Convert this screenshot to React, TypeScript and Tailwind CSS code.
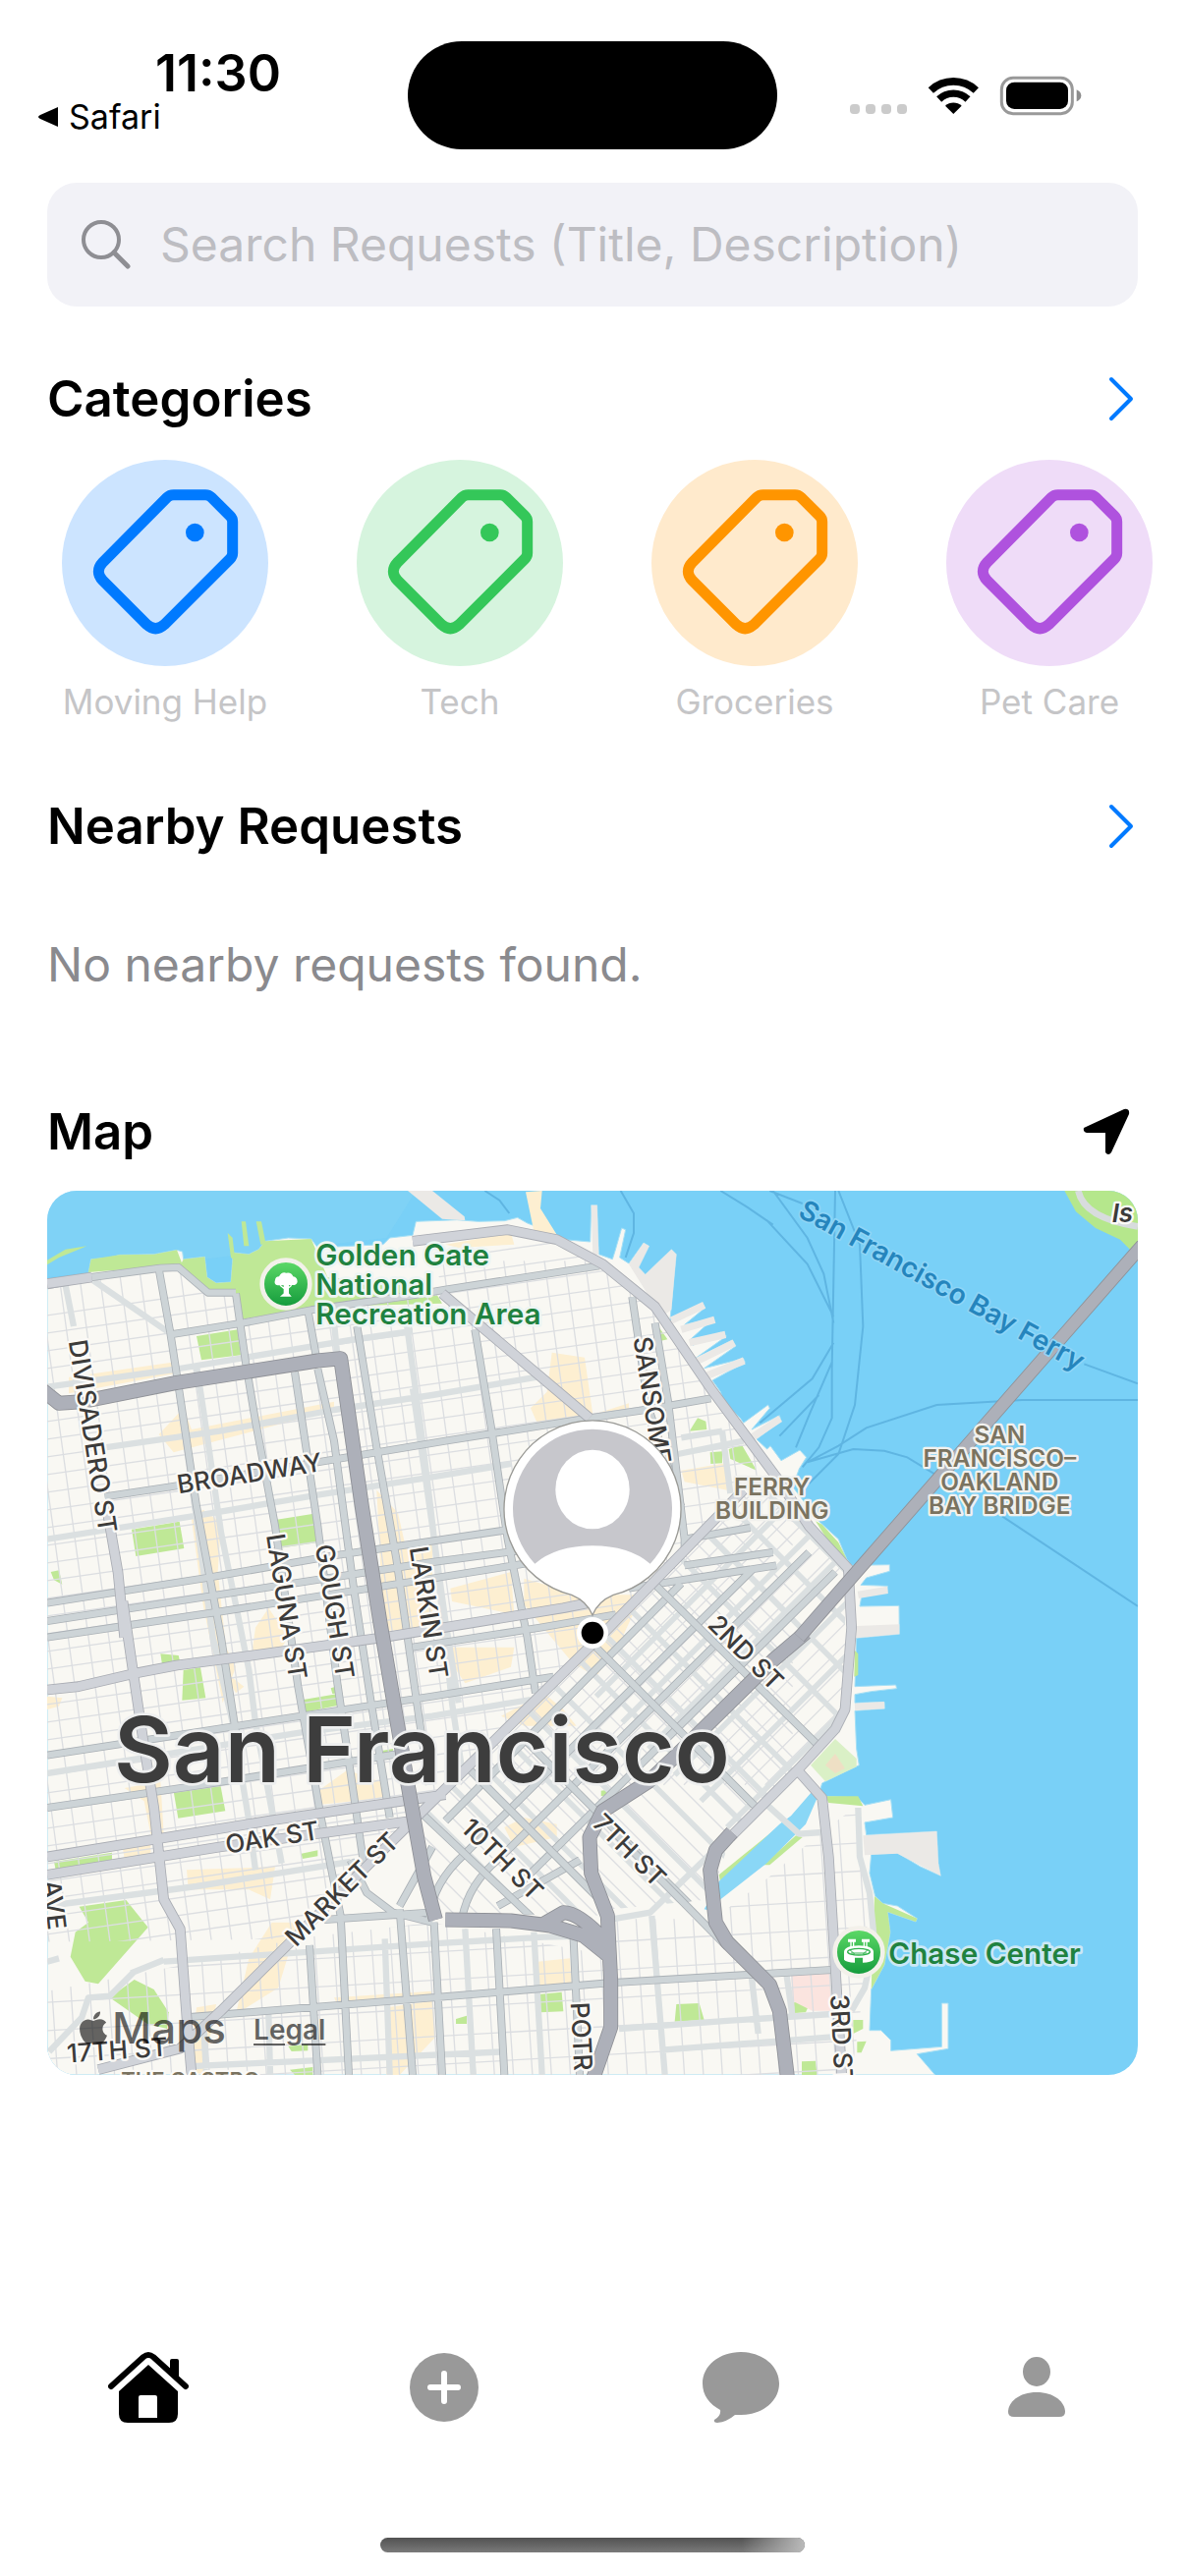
import React from "react";
import { FaApple } from "react-icons/fa";

const categories = [
  { name: "Moving Help", disc: "bg-[#cce4ff]", ink: "text-[#007aff]" },
  { name: "Tech", disc: "bg-[#d6f4de]", ink: "text-[#34c759]" },
  { name: "Groceries", disc: "bg-[#ffeacc]", ink: "text-[#ff9500]" },
  { name: "Pet Care", disc: "bg-[#efdcf8]", ink: "text-[#af52de]" },
];

function StatusBar() {
  return (
    <header className="grid grid-cols-[1fr_376px_1fr] pt-[42px]">
      <div className="flex flex-col items-start pt-1">
        <time className="pl-[158px] text-[52px] leading-[58px] font-semibold">11:30</time>
        <a href="#safari" className="-mt-1 flex items-center gap-[10px] pl-[38px] text-[34px] leading-[38px]">
          <svg viewBox="0 0 22 22" className="size-[22px]" aria-hidden="true">
            <path d="M21 1v20L3 13q-4-2 0-4z" />
          </svg>
          Safari
        </a>
      </div>
      <div className="h-[110px] rounded-[55px] bg-black" />
      <div className="flex items-start pt-2 pl-[74px]">
        <svg viewBox="0 0 240 90" className="h-[90px] w-60" aria-label="Wi-Fi on, battery full">
          <g transform="scale(.33333)">
            {[0, 48, 96, 144].map((x) => (
              <rect key={x} x={x} y="168" width="30" height="30" rx="11" fill="#cbcbcb" />
            ))}
            <g fill="none" stroke="#000">
              <path d="M247 126A101 101 0 0 1 385 126" strokeWidth="23" />
              <path d="M272 153A64 64 0 0 1 360 153" strokeWidth="22" />
            </g>
            <path d="M316 198L291 173A37 37 0 0 1 341 173Z" />
            <rect x="463" y="88" width="216" height="109" rx="35" fill="none" stroke="#999" strokeWidth="9" />
            <rect x="477" y="101" width="189" height="82" rx="25" />
            <path d="M692 124Q706 130 706 142Q706 154 692 160Z" fill="#8c8c8c" />
          </g>
        </svg>
      </div>
    </header>
  );
}

function Chevron() {
  return (
    <svg viewBox="0 0 28 46" className="mr-[2px] h-[46px] w-7 text-[#007aff]" fill="none" stroke="currentColor" strokeWidth="4" strokeLinecap="round" strokeLinejoin="round" aria-hidden="true">
      <path d="M3 3L23 23L3 43" />
    </svg>
  );
}

function SectionHeader({ title, label, children }: { title: string; label: string; children: React.ReactNode }) {
  return (
    <div className="flex items-center justify-between px-12">
      <h2 className="text-[51px] leading-[60px] font-semibold">{title}</h2>
      <button type="button" aria-label={label}>
        {children}
      </button>
    </div>
  );
}

function TagIcon() {
  return (
    <svg viewBox="9 24 630 630" className="size-full" fill="none" aria-hidden="true">
      <path
        d="M350 131H447Q458 131 466 139L522 195Q530 203 530 213V309Q530 319 522 327L322 527Q295 551 268 527L134 393Q108 365 134 337L330 139Q338 131 350 131Z"
        stroke="currentColor"
        strokeWidth="33"
      />
      <circle cx="415" cy="246" r="28" fill="currentColor" />
    </svg>
  );
}

type Line = string;

/* Parallel block streets: `n` lines from (x,y), each one step further on, running along (dx,dy). */
function streets(x: number, y: number, stepX: number, stepY: number, n: number, dx: number, dy: number): Line {
  let d = "";
  for (let i = 0; i < n; i++) d += `M${x + i * stepX} ${y + i * stepY}l${dx} ${dy}`;
  return d;
}

const LAND =
  "24,312 90,300 150,288 158,245 215,240 245,232 350,230 420,217 437,222 440,245 505,238 512,300 540,318 585,315 592,225 640,230 670,215 690,190 760,180 830,183 850,210 1050,200 1070,180 1140,172 1150,130 1275,125 1340,130 1420,128 1460,118 1490,135 1580,170 1600,185 1682,192 1685,80 1703,80 1708,230 1750,245 1758,220 1778,150 1790,155 1772,240 1800,258 1845,195 1862,205 1830,270 1850,292 1930,215 1945,230 1938,300 1926,430 1955,430 2025,380 2033,393 1970,445 2060,425 1988,490 1995,508 2080,468 2098,480 2000,550 2115,492 2127,510 2030,578 2150,548 2155,560 2055,615 2080,650 2090,680 2140,730 2150,745 2225,690 2230,700 2175,765 2260,722 2265,738 2190,795 2222,825 2232,815 2265,860 2322,828 2342,850 2320,885 2300,940 2380,1045 2440,1100 2465,1160 2480,1180 2596,1178 2596,1198 2525,1218 2508,1240 2590,1243 2590,1260 2510,1277 2505,1305 2625,1303 2626,1390 2495,1402 2490,1550 2540,1548 2615,1545 2618,1556 2540,1565 2490,1574 2490,1600 2580,1597 2582,1617 2490,1624 2495,1740 2503,1790 2450,1815 2390,1845 2380,1880 2400,1885 2500,1890 2520,1912 2600,1895 2606,1950 2520,1965 2525,2003 2740,1992 2745,2090 2752,2128 2690,2100 2620,2058 2540,2062 2535,2120 2552,2190 2575,2212 2620,2220 2680,2258 2676,2268 2590,2238 2598,2300 2580,2400 2540,2475 2535,2600 2570,2600 2600,2630 2600,2662 2755,2650 2755,2517 2775,2517 2775,2656 2680,2672 2735,2736 24,2736";

const GREEN = [
  "24,248 80,215 145,205 60,240 24,262",
  "150,285 158,245 245,232 350,230 420,217 437,262 370,268",
  "430,265 440,245 505,238 512,300 540,318 585,315 592,225 640,230 670,215 690,190 830,183 880,300 1200,330 1230,380 850,390 620,428 600,347 515,347",
  "575,165 590,180 598,250 585,240", "617,130 630,130 640,205 625,205", "662,130 678,130 692,200 676,200",
  "480,480 605,460 615,538 495,553", "282,1070 428,1046 442,1128 295,1152", "716,1042 838,1022 850,1110 730,1128",
  "35,1200 60,1195 70,1238 45,1225", "370,1450 425,1455 430,1475 375,1482", "440,1500 492,1492 508,1585 436,1592",
  "806,1590 925,1570 925,1605 810,1628", "890,1555 922,1545 922,1570 895,1572", "410,1870 552,1846 568,1930 424,1952",
  "45,2085 222,2057 222,2080 50,2110", "800,2060 850,2050 850,2068 803,2076", "1050,1745 1080,1740 1080,1758 1050,1760",
  "122,2222 265,2202 332,2285 180,2458 140,2450 95,2375 110,2300 150,2270", "215,2500 290,2445 350,2475 395,2545 390,2595 330,2580",
  "1890,450 1918,490 1895,495", "1985,770 2010,730 2035,740 2038,765", "2048,835 2085,832 2085,868 2050,870", "2105,825 2145,812 2190,890 2110,855",
  "2370,1045 2390,1055 2440,1110 2465,1160 2430,1140", "2490,1440 2500,1450 2500,1515 2488,1520",
  "2400,1885 2500,1885 2515,1915 2410,1905", "1715,1868 1735,1865 1742,1880 1715,1885",
  "2075,2125 2260,1975 2260,1995 2080,2150", "2210,2095 2310,2005 2330,2010 2230,2095",
  "2550,2190 2575,2212 2680,2258 2676,2268 2590,2238 2598,2300 2580,2400 2540,2475", "1525,2490 1595,2483 1600,2542 1530,2545",
  "1945,2520 2015,2517 2030,2568 1940,2573", "1272,2565 1305,2555 1305,2580 1272,2580", "2298,2515 2355,2512 2340,2545 2295,2548",
  "2485,2568 2515,2568 2515,2595 2485,2610", "2497,2635 2525,2633 2510,2668 2497,2668", "2328,2695 2370,2693 2375,2736 2328,2736",
  "760,2648 820,2642 820,2662 770,2664", "765,2720 835,2712 835,2736 780,2736",
];

const SHOPS = [
  "90,605 405,560 410,595 90,655", "365,780 440,700 465,765 900,680 900,705 410,835", "465,1040 500,1010 555,1050 545,1200 570,1430 600,1490 560,1600 500,1300",
  "560,1500 625,1550 600,1570", "660,1370 700,1310 760,1400 740,1430 650,1440", "1030,950 1095,1020 1120,1130 1200,1100 1200,1370 1050,1380 1040,1150",
  "1485,40 1535,36 1530,90 1580,170 1510,160", "1240,200 1440,165 1450,200 1280,210", "1565,530 1665,545 1690,720 1800,685 1800,720 1520,745 1500,700 1550,650",
  "1960,890 2095,868 2100,950 1970,925", "1255,1250 1440,1200 1450,1330 1260,1290", "1480,1220 1650,1270 1840,1270 1780,1400 1700,1520 1630,1480 1480,1300",
  "1225,1430 1450,1430 1440,1490 1300,1540", "1410,1640 1540,1570 1600,1620 1640,1670 1480,1670", "850,1870 940,1805 1040,1840 1050,1890 860,1910",
  "260,1860 370,1840 380,2000 340,2000 320,1900", "255,2045 340,2030 340,2065 260,2075", "450,2110 720,2100 705,2200 640,2170 455,2170",
  "710,2270 790,2270 730,2470 600,2550 640,2380", "1420,1980 1480,1950 1580,1970 1580,2010 1450,2040", "1520,2390 1620,2380 1625,2460 1525,2465",
  "900,2500 1200,2480 1200,2510 910,2520", "1060,2530 1200,2510 1210,2620 1100,2736 1060,2736", "24,1580 70,1585 60,1610 24,1620", "480,2530 540,2520 500,2736 460,2720",
];

const LIGHT = [
  "M24 635L410 582L960 490L1140 465", "M80 325L105 450", "M165 310L390 465", "M200 820L550 770L900 705L1200 660L1520 605", "M24 1100L500 1025L850 965L1200 910L1440 870",
  "M480 570L500 700L555 1080L600 1300L640 1500L660 1660L740 2090", "M470 960L530 1400L590 1660L640 1960L660 2110",
  "M24 1815L800 1690L1200 1640L1500 1590", "M24 2220L480 2160L950 2085", "M1120 430L1170 800L1200 1050L1260 1600L1290 1800",
  "M900 440L910 540", "M1140 640L1200 1060L1240 1350L1280 1600", "M1960 790L2085 770", "M1950 840L2150 800", "M2085 770L2110 960",
  "M380 2390L1200 2335L1540 2315L1740 2310", "M450 2710L1420 2665", "M24 2390L60 2380", "M1770 2595L2110 2570L2420 2550", "M1900 2660L2420 2620",
  "M500 2560L510 2736", "M700 2550L705 2736", "M1055 2320L1070 2736", "M1300 2290L1325 2736", "M1510 2300L1535 2736", "M1870 2250L1910 2736", "M2175 2440L2195 2610", "M2280 2420L2300 2560",
  "M280 2425L380 2385", "M30 2665L130 2560L150 2500L215 2495L290 2420", "M2500 1920L2505 2070L2535 2180L2550 2330L2520 2470L2480 2540",
  "M2220 1910L2320 2000L2390 1995", "M1750 2260L1865 2240L2080 2030",
];
const SECONDARY = [
  "M24 325L160 300L370 272L425 270L515 347L600 347", "M365 275L400 470L420 600L480 1000L555 1400L600 1690", "M400 475L620 440L830 400L1140 355L1240 338L1710 265",
  "M600 350L630 560L660 740L720 1060L790 1550L860 1950L920 2250L945 2736", "M780 590L850 1060L910 1540L960 1880L990 2090", "M850 580L900 800L960 1250L1010 1580L1070 1950",
  "M820 400L845 540", "M970 450L1030 820L1090 1160L1160 1650L1190 1850", "M1330 460L1380 760L1430 1100L1490 1400L1515 1570", "M1810 360L1860 700L1960 1000",
  "M1880 440L1920 680L1970 1100L1970 1140", "M200 970L400 940L880 860L1240 800L1680 730L1850 705L2050 670", "M24 1295L500 1220L900 1150L1440 1070L1560 1050",
  "M24 1350L600 1262L1200 1170L1500 1130", "M24 1400L560 1320L1200 1220L1700 1140", "M24 1760L800 1640L1200 1580L1570 1520", "M24 1920L500 1850L1100 1755",
  "M1140 1430L1530 1370L1760 1330", "M1800 1250L2250 1180", "M1970 1180L2240 1140", "M1970 1100L2170 1065",
  "M870 2262L1190 2240", "M450 2560L1200 2500L1740 2455L2420 2415", "M825 2340L850 2736", "M1100 2230L1140 2736", "M1205 2270L1230 2736", "M1395 2290L1420 2736", "M1630 2300L1650 2736",
  "M950 2080L1000 2180L1080 2240L1200 2270", "M1100 2220L1200 2040",
  "M1240 1960L1960 1235", "M1190 2260Q1200 2150 1300 2060L2180 1190", "M1290 2260Q1310 2150 1410 2070L2350 1140", "M1470 2150L2430 1200", "M1400 2220L1650 2080",
];
const MAJOR = [
  "M255 1290L290 1530L315 1700L350 1920L380 2200L430 2290L450 2560L465 2736", "M24 1560L120 1550L290 1510L420 1485L650 1455L1050 1400L1600 1310L1700 1290",
  "M24 2070L700 1960L1240 1880", "M24 2125L550 2040L1140 1960", "M205 1000L240 1200L260 1400", "M1230 350L1680 730",
  "M24 320L160 300", "M2150 950L1730 1380L1140 1960L555 2540L430 2655L180 2720",
  "M1140 190L1430 155L1580 185L1720 260L1880 390L2050 640L2250 910L2350 1060L2470 1190L2480 1370L2460 1620L2430 1680L2320 1800L2110 2010",
  "M2310 1800L2390 1890L2410 2070L2430 2400L2450 2736",
];
const HIGHWAY = [
  "M10 645L60 685L130 680L420 622L850 555L920 548L985 1000L1040 1350L1120 1820L1175 2130L1210 2262", "M1240 2262L1440 2265L1560 2280L1660 2310L1735 2370",
  "M1540 2275L1600 2240Q1650 2240 1730 2330", "M2340 1385L2240 1470L1950 1755L1860 1840L1720 1930L1680 2010L1685 2120L1735 2250L1745 2450L1745 2590L1690 2750",
  "M2115 1995L2065 2050L2048 2110L2065 2270L2100 2330L2230 2460L2260 2540L2285 2750",
];
const BRIDGE = "M3400 165L2320 1400";

const FERRIES =
  "M2240 36L2345 180L2395 290L2425 440M2220 125L2345 260L2425 420M2430 36L2420 580V730L2380 820L2330 880M2440 36L2505 200L2515 450L2490 690L2440 840L2350 930M2425 500L2360 610L2200 745M2420 560L2355 710L2310 820M2380 660L2260 785M2345 865L2440 815L2525 760L2740 690L3000 675H3354M2345 865L2485 825L2580 830L2650 850L2740 905M2940 1030L3354 1305M2230 36L2330 75M3190 565L3354 625M2080 36L2160 85L2240 140M1775 36L1815 105V165L1790 240M1360 36L1405 65L1435 105";

function Casing({ lines, edge, fill, width }: { lines: Line[]; edge: string; fill: string; width: number }) {
  const d = lines.join("");
  return (
    <>
      <path d={d} stroke={edge} strokeWidth={width + 5} />
      <path d={d} stroke={fill} strokeWidth={width} />
    </>
  );
}

function Street({ x, y, turn, children }: { x: number; y: number; turn: number; children: string }) {
  return (
    <text transform={`translate(${x} ${y}) rotate(${turn})`} textAnchor="middle">
      {children}
    </text>
  );
}

function CityMap() {
  return (
    <svg viewBox="24 36 3330 2700" className="block w-full font-[Inter,sans-serif]" role="img" aria-label="Map of San Francisco">
      <defs>
        <linearGradient id="poi" x1="0" y1="0" x2="0" y2="1">
          <stop offset="0" stopColor="#5fdb68" />
          <stop offset="1" stopColor="#12993b" />
        </linearGradient>
        <clipPath id="north">
          <polygon points="24,330 370,280 425,280 515,355 600,355 620,430 1240,330 1150,190 1430,160 1580,190 1720,270 1880,400 2230,900 2150,950 1730,1380 780,2320 24,2330" />
        </clipPath>
        <clipPath id="soma">
          <polygon points="1140,1975 2150,960 2230,930 2460,1190 2460,1640 2300,1820 2110,2010 2050,2200 1750,2230 1700,2250 1230,2240" />
        </clipPath>
        <clipPath id="south">
          <polygon points="780,2320 1200,2270 1730,2370 1760,2260 2060,2260 2230,2130 2380,2000 2490,1920 2530,2200 2520,2450 2480,2736 24,2736 24,2480 440,2400" />
        </clipPath>
      </defs>
      <rect x="24" y="36" width="3330" height="2700" fill="#79d0f7" />
      <path d="M24 36H1150L1060 180L24 300Z" fill="#86d4f5" opacity=".5" />
      <path d={FERRIES} fill="none" stroke="#5fb5e2" strokeWidth="6" />
      <polygon points={LAND} fill="#f9f8f3" stroke="#a5dff5" strokeWidth="3" />
      <g fill="#ebe9e6">
        <polygon points="1125,36 1200,36 1298,115 1300,127 1230,122" />
        <polygon points="1685,80 1703,80 1708,230 1690,235" />
        <polygon points="1800,260 1845,195 1862,205 1830,270 1850,292 1930,215 1945,230 1930,400 1900,420" />
        <path d="M1930 432L2030 385M1960 460L2062 430M1985 500L2095 475M2000 560L2122 500M2040 600L2152 555M2175 790L2262 732M2500 1270L2590 1255M2490 1612L2580 1607" stroke="#ebe9e6" strokeWidth="22" />
        <polygon points="2495,1365 2626,1360 2626,1390 2495,1402" />
        <polygon points="2515,2005 2740,1992 2745,2090 2752,2128 2620,2060 2520,2065" />
      </g>
      <g fill="#bfe896">
        {GREEN.map((p) => (
          <polygon key={p} points={p} />
        ))}
      </g>
      <polygon points="2355,1790 2430,1710 2495,1770 2495,1795 2400,1840" fill="#daf0c6" />
      <polygon points="2400,1790 2430,1755 2460,1800 2430,1815" fill="#eedfc4" />
      <polygon points="2295,2425 2415,2420 2420,2540 2360,2540 2300,2510" fill="#fbe4df" />
      <g fill="#fdefd1">
        {SHOPS.map((p) => (
          <polygon key={p} points={p} />
        ))}
      </g>
      <polygon points="2390,1860 2375,1890 2340,1970 2220,2090 2080,2200 2070,2240 2030,2230 2070,2160 2075,2145 2260,1970 2295,1945 2360,1870" fill="#8ad7f6" />

      <g fill="none" strokeLinejoin="round">
        <g stroke="#dcdee1" strokeWidth="4">
          <g clipPath="url(#north)">
            <path d={streets(-380, 250, 62, 0, 45, 330, 2400)} />
            <path d={streets(0, 420, 0, 54, 46, 2300, -330)} />
          </g>
          <g clipPath="url(#soma)">
            <path d={streets(1100, 1850, 62, 0, 32, 1000, -1000)} />
            <path d={streets(1100, 2150, 0, -72, 36, 1200, 1200)} />
          </g>
          <g clipPath="url(#south)">
            <path d={streets(0, 1900, 58, 0, 46, 60, 900)} />
            <path d={streets(0, 2000, 0, 86, 12, 2600, -150)} />
          </g>
        </g>
        <path d={LIGHT.join("")} stroke="#dbe0e1" strokeWidth="19" />
        <g clipPath="url(#soma)" stroke="#dbe0e1" strokeWidth="17">
          <path d={streets(1000, 1750, 0, -155, 16, 1500, 1500)} />
          <path d={streets(1700, 1580, 80, 80, 6, 700, -700)} />
        </g>
        <Casing lines={SECONDARY} edge="#abb1b6" fill="#cdd4d7" width={19} />
        <g clipPath="url(#soma)">
          <Casing lines={["M1750 1110L2480 1830", "M1590 1320L2380 2110", "M1160 1930L1700 2440", "M1300 1790L1740 2230", "M1490 1720L2120 2350"]} edge="#abb1b6" fill="#cdd4d7" width={19} />
        </g>
        <Casing lines={["M1760 2000L2100 2345"]} edge="#abb1b6" fill="#cdd4d7" width={19} />
        <Casing lines={MAJOR} edge="#a9acb3" fill="#d0d3d9" width={27} />
        <Casing lines={HIGHWAY} edge="#8e9096" fill="#adb0b9" width={40} />
      </g>
      <polygon points="3130,36 3165,100 3225,150 3300,185 3330,215 3354,190 3354,36" fill="#b5e78c" />
      <path d="M3172 36Q3190 120 3354 145" fill="none" stroke="#d8dcdd" strokeWidth="20" />
      <g fill="none">
        <Casing lines={[BRIDGE]} edge="#8e9096" fill="#adb0b9" width={36} />
      </g>

      <g fill="#3c3b3a" stroke="#fbfaf7" strokeWidth="14" strokeLinejoin="round" paintOrder="stroke" fontSize="78" fontWeight="500">
        <Street x={136} y={790} turn={81}>DIVISADERO ST</Street>
        <Street x={646} y={926} turn={-9}>BROADWAY</Street>
        <Street x={728} y={1310} turn={81}>LAGUNA ST</Street>
        <Street x={875} y={1325} turn={81}>GOUGH ST</Street>
        <Street x={1162} y={1328} turn={81}>LARKIN ST</Street>
        <Street x={1844} y={680} turn={81}>SANSOME</Street>
        <Street x={2138} y={1466} turn={45}>2ND ST</Street>
        <Street x={1783} y={2069} turn={45}>7TH ST</Street>
        <Street x={1394} y={2097} turn={45}>10TH ST</Street>
        <Street x={943} y={2188} turn={-45}>MARKET ST</Street>
        <Street x={715} y={2038} turn={-9}>OAK ST</Street>
        <Street x={240} y={2688} turn={-4}>17TH ST</Street>
        <Street x={1628} y={2620} turn={87}>POTR</Street>
        <Street x={2422} y={2630} turn={87}>3RD ST</Street>
        <Street x={18} y={2220} turn={83}>AVE</Street>
        <text x="3275" y="132" fontStyle="italic" fontWeight="600">Is</text>
        <text x="462" y="2776" fontSize="66" fontWeight="600" fill="#7a7360" textAnchor="middle">THE CASTRO</text>
      </g>

      <g fill="#7a7360" stroke="#f1f1ee" strokeWidth="14" strokeLinejoin="round" paintOrder="stroke" fontSize="73" fontWeight="600" textAnchor="middle">
        <text x="2237" y="965">FERRY</text>
        <text x="2237" y="1038">BUILDING</text>
        <text x="2932" y="808">SAN</text>
        <text x="2932" y="880">FRANCISCO–</text>
        <text x="2932" y="952">OAKLAND</text>
        <text x="2932" y="1024">BAY BRIDGE</text>
      </g>
      <text transform="translate(2742 350) rotate(29)" textAnchor="middle" fontSize="84" fontWeight="600" fill="#2585bd" stroke="#8fd5f6" strokeWidth="10" strokeLinejoin="round" paintOrder="stroke">
        San Francisco Bay Ferry
      </text>

      <g fill="#1f8240" stroke="#edf5f3" strokeWidth="16" strokeLinejoin="round" paintOrder="stroke" fontSize="89" fontWeight="600">
        <text x="844" y="264">Golden Gate</text>
        <text x="844" y="354">National</text>
        <text x="844" y="444">Recreation Area</text>
        <text x="2593" y="2396" stroke="#cbe8f5">Chase Center</text>
      </g>
      <g stroke="#f3f1ea" strokeWidth="14">
        <circle cx="753" cy="321" r="73" fill="url(#poi)" />
        <circle cx="2502" cy="2361" r="73" fill="url(#poi)" />
      </g>
      <path d="M748 335L735 325M748 345V325H760V350L766 357H740L748 350ZM758 335L770 325" fill="#fff" stroke="#fff" strokeWidth="4" />
      <path d="M728 325Q715 322 720 308Q722 298 732 298Q740 282 754 287Q770 284 775 298Q788 300 788 314Q786 324 774 324Z" fill="#fff" />
      <g fill="#fff">
        <path d="M2469 2321h24v9h-24zM2511 2321h24v9h-24zM2476 2330h4v16h-4zM2484 2330h4v16h-4zM2516 2330h4v16h-4zM2524 2330h4v16h-4z" />
        <path d="M2457 2360Q2458 2342 2502 2341Q2546 2342 2547 2360V2384Q2540 2392 2514 2393V2378H2490V2393Q2464 2392 2457 2384Z" />
        <ellipse cx="2502" cy="2360" rx="34" ry="10" fill="none" stroke="#2fb24c" strokeWidth="4" />
        <path d="M2475 2354L2490 2368M2529 2354L2514 2368M2478 2364H2526" stroke="#2fb24c" strokeWidth="3" />
      </g>

      <text x="1168" y="1842" textAnchor="middle" fontSize="276" fontWeight="600" fill="#3d3d3d" stroke="#eeefef" strokeWidth="16" strokeLinejoin="round" paintOrder="stroke">
        San Francisco
      </text>

      <path d="M1625 1270A270 270 0 1 1 1753 1270Q1705 1290 1689 1332Q1673 1290 1625 1270Z" fill="#fff" stroke="#9a9a96" strokeWidth="4" />
      <path d="M1513 1175A243 243 0 1 1 1865 1175Q1800 1120 1689 1120Q1578 1120 1513 1175Z" fill="#c7c7cc" />
      <ellipse cx="1689" cy="948" rx="113" ry="121" fill="#fff" />
      <circle cx="1689" cy="1386" r="48" fill="#fff" />
      <circle cx="1689" cy="1386" r="34" fill="#000" />
    </svg>
  );
}

function HomeIcon() {
  return (
    <svg viewBox="0 0 82 74" className="h-[74px] w-[82px]" aria-hidden="true">
      <path d="M3 36L36 6Q41 2 46 6L79 36" fill="none" stroke="currentColor" strokeWidth="6" strokeLinecap="round" strokeLinejoin="round" />
      <path d="M63 10Q63 8 65 8H70Q72 8 72 10V32L63 24Z" />
      <path fillRule="evenodd" d="M41 14L71 41V64Q71 73 62 73H20Q11 73 11 64V41ZM33 45Q31 45 31 47V68H50V47Q50 45 48 45Z" />
    </svg>
  );
}

function PlusIcon() {
  return (
    <svg viewBox="0 0 70 70" className="size-[70px]" aria-hidden="true">
      <circle cx="35" cy="35" r="35" />
      <path d="M35 21V49M21 35H49" stroke="#fff" strokeWidth="6" strokeLinecap="round" />
    </svg>
  );
}

function ChatIcon() {
  return (
    <svg viewBox="0 0 78 74" className="h-[74px] w-[78px]" aria-hidden="true">
      <path d="M39 1C61 1 78 15 78 33S61 65 39 65Q36 65 33 65Q25 72 15 73Q11 73 12 70Q19 66 18 60C7 54 0 45 0 33C0 15 17 1 39 1Z" />
    </svg>
  );
}

function PersonIcon() {
  return (
    <svg viewBox="0 0 58 62" className="h-[62px] w-[58px]" aria-hidden="true">
      <ellipse cx="29" cy="15" rx="14" ry="15" />
      <path d="M6 61Q0 61 0 56C0 46 11 36 29 36S58 46 58 56Q58 61 52 61Z" />
    </svg>
  );
}

const tabs = [
  { name: "Home", icon: <HomeIcon />, ink: "text-black" },
  { name: "Create request", icon: <PlusIcon />, ink: "text-[#999999]" },
  { name: "Messages", icon: <ChatIcon />, ink: "text-[#999999]" },
  { name: "Profile", icon: <PersonIcon />, ink: "text-[#999999]" },
];

export default function App() {
  return (
    <div className="flex min-h-screen flex-col bg-white font-[Inter,sans-serif] text-black">
      <StatusBar />
      <main className="flex flex-1 flex-col">
        <label className="mx-12 mt-[34px] flex h-[126px] items-center gap-[29px] rounded-[30px] bg-[#f2f2f7] px-[34px]">
          <svg viewBox="0 0 52 52" className="size-[52px] shrink-0 text-[#8e8e93]" fill="none" stroke="currentColor" strokeLinecap="round" aria-hidden="true">
            <circle cx="21" cy="21" r="18" strokeWidth="4" />
            <path d="M34 34L48 48" strokeWidth="5" />
          </svg>
          <input
            type="search"
            aria-label="Search requests"
            placeholder="Search Requests (Title, Description)"
            className="min-w-0 flex-1 bg-transparent text-[48px] outline-none placeholder:text-[#bdbdc2]"
          />
        </label>

        <section className="mt-16">
          <SectionHeader title="Categories" label="All categories">
            <Chevron />
          </SectionHeader>
          <ul className="mt-8 flex gap-[90px] overflow-x-auto pl-[63px] [scrollbar-width:none]">
            {categories.map((c) => (
              <li key={c.name} className="w-[210px] shrink-0">
                <button type="button" className="flex w-full flex-col items-center">
                  <span className={`block size-[210px] rounded-full ${c.disc} ${c.ink}`}>
                    <TagIcon />
                  </span>
                  <span className="mt-[14px] text-[35px] leading-[44px] whitespace-nowrap text-[#c5c5c7]">{c.name}</span>
                </button>
              </li>
            ))}
          </ul>
        </section>

        <section className="mt-[75px]">
          <SectionHeader title="Nearby Requests" label="All nearby requests">
            <Chevron />
          </SectionHeader>
          <p className="mt-[81px] px-12 text-[48px] leading-[60px] text-[#8a8a8e]">No nearby requests found.</p>
        </section>

        <section className="mt-[110px]">
          <SectionHeader title="Map" label="Centre on my location">
            <svg viewBox="0 0 48 48" className="mr-2 size-12" aria-hidden="true">
              <path d="M42 1Q48 0 47 6L29 45Q26 49 23 45V25H4Q0 24 1 20Z" />
            </svg>
          </SectionHeader>
          <div className="relative mx-12 mt-[30px] overflow-hidden rounded-[30px]">
            <CityMap />
            <div className="absolute bottom-5 left-7 flex items-center text-black/60">
              <FaApple className="size-[38px]" aria-hidden="true" />
              <span className="text-[44px] leading-[56px] font-medium">Maps</span>
              <a href="#legal" className="ml-7 pt-1 text-[28px] font-semibold underline underline-offset-4">
                Legal
              </a>
            </div>
          </div>
        </section>
      </main>

      <footer className="pb-6">
        <nav className="grid grid-cols-4">
          {tabs.map((t) => (
            <button key={t.name} type="button" aria-label={t.name} className={`flex h-[76px] items-center justify-center fill-current ${t.ink}`}>
              {t.icon}
            </button>
          ))}
        </nav>
        <div className="mx-auto mt-[115px] h-[15px] w-[432px] overflow-hidden rounded-full bg-linear-to-b from-[#525252] to-[#7a7a7a]">
          <div className="ml-auto h-full w-16 bg-linear-to-r from-transparent to-[#bababa]" />
        </div>
      </footer>
    </div>
  );
}
